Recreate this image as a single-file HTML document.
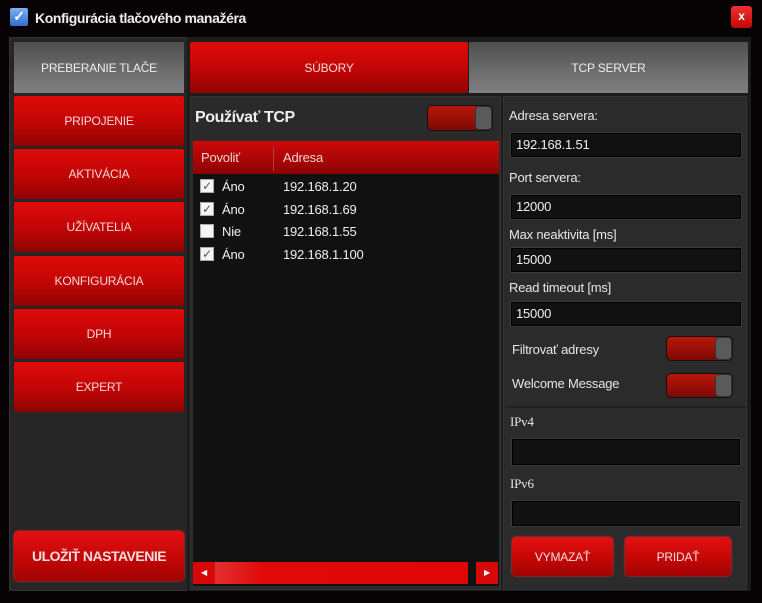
<!DOCTYPE html>
<html><head><meta charset="utf-8"><style>
*{box-sizing:border-box;margin:0;padding:0}
body{width:762px;height:603px;background:#070304;position:relative;overflow:hidden;font-family:"Liberation Sans",sans-serif;color:#eee;letter-spacing:-0.2px}
.a{position:absolute}
.red{background:linear-gradient(#e00a0a,#c00505 55%,#8e0202);color:#f0d8d8;font-size:12px;display:flex;align-items:center;justify-content:center;border-radius:2px}
.gray{background:linear-gradient(#4e4e4e,#6e6e6e 60%,#808080);color:#eee;font-size:12px;display:flex;align-items:center;justify-content:center}
.lbl{font-size:13px;color:#e6e6e6}
.inp{background:#111;border:1px solid #3a3a3a;box-shadow:inset 0 0 0 1px #000;font-size:13px;color:#f0f0f0;padding:4px 0 0 5px}
.tog{background:linear-gradient(#b8160a,#7c0a04);border:1px solid #111;border-radius:5px}
.tog:after{content:"";position:absolute;right:0;top:0;width:17px;height:100%;background:#5a5a5a;border-radius:4px;border:1px solid #333;box-sizing:border-box}
.cb{width:14px;height:14px;background:#f4f4f4;border:1px solid #aaa;font-size:12px;color:#555;line-height:13px;text-align:center}
.row{font-size:13px;color:#eee}
.btn{background:linear-gradient(#e41010,#c00606 60%,#a00303);border-radius:4px;color:#f3dede;font-size:12px;display:flex;align-items:center;justify-content:center;box-shadow:0 0 2px #f33}
</style></head><body>
<div class="a" style="left:10px;top:8px;width:18px;height:18px;background:linear-gradient(#7fb0f0,#2f6fd0);border-radius:2px;color:#fff;font-size:14px;text-align:center;line-height:17px;font-weight:bold">✓</div>
<div class="a" style="left:35px;top:10px;font-size:14px;font-weight:bold;color:#eee;letter-spacing:-0.4px">Konfigurácia tlačového manažéra</div>
<div class="a" style="left:731px;top:6px;width:21px;height:22px;background:linear-gradient(#f03030,#c00808);border-radius:3px;color:#fff;font-size:12px;font-weight:bold;text-align:center;line-height:21px">x</div>

<div class="a" style="left:9px;top:37px;width:180px;height:554px;background:#262626;border:1px solid #333"></div>
<div class="a" style="left:187px;top:37px;width:564px;height:554px;background:#1c1c1c"></div>

<div class="a gray" style="left:14px;top:42px;width:170px;height:51px">PREBERANIE TLAČE</div>
<div class="a red" style="left:14px;top:96px;width:170px;height:50px">PRIPOJENIE</div>
<div class="a red" style="left:14px;top:149px;width:170px;height:50px">AKTIVÁCIA</div>
<div class="a red" style="left:14px;top:202px;width:170px;height:50px">UŽÍVATELIA</div>
<div class="a red" style="left:14px;top:256px;width:170px;height:50px">KONFIGURÁCIA</div>
<div class="a red" style="left:14px;top:309px;width:170px;height:50px">DPH</div>
<div class="a red" style="left:14px;top:362px;width:170px;height:50px">EXPERT</div>
<div class="a btn" style="left:14px;top:531px;width:170px;height:50px;font-weight:bold;font-size:14px;letter-spacing:-0.5px">ULOŽIŤ NASTAVENIE</div>

<div class="a red" style="left:190px;top:42px;width:278px;height:51px">SÚBORY</div>
<div class="a gray" style="left:469px;top:42px;width:279px;height:51px">TCP SERVER</div>

<div class="a" style="left:190px;top:96px;width:311px;height:494px;background:#2a2a2a;border:1px solid #333"></div>
<div class="a" style="left:195px;top:109px;font-size:16px;font-weight:bold;color:#eee;letter-spacing:-0.4px">Používať TCP</div>
<div class="a tog" style="left:427px;top:105px;width:66px;height:26px"></div>
<div class="a" style="left:192px;top:140px;width:308px;height:447px;background:#111;border:1px solid #2e2e2e"></div>
<div class="a" style="left:193px;top:141px;width:306px;height:33px;background:linear-gradient(#d00808,#8a0303)"></div>
<div class="a" style="left:273px;top:147px;width:1px;height:24px;background:#b04040"></div>
<div class="a row" style="left:201px;top:150px;color:#f0d0d0">Povoliť</div>
<div class="a row" style="left:283px;top:150px;color:#f0d0d0">Adresa</div>
<div class="a cb" style="left:200px;top:179px">✓</div><div class="a row" style="left:222px;top:179px">Áno</div><div class="a row" style="left:283px;top:179px">192.168.1.20</div>
<div class="a cb" style="left:200px;top:202px">✓</div><div class="a row" style="left:222px;top:202px">Áno</div><div class="a row" style="left:283px;top:202px">192.168.1.69</div>
<div class="a cb" style="left:200px;top:224px"></div><div class="a row" style="left:222px;top:224px">Nie</div><div class="a row" style="left:283px;top:224px">192.168.1.55</div>
<div class="a cb" style="left:200px;top:247px">✓</div><div class="a row" style="left:222px;top:247px">Áno</div><div class="a row" style="left:283px;top:247px">192.168.1.100</div>
<div class="a" style="left:193px;top:562px;width:22px;height:22px;background:#d80808;color:#fff;font-size:8px;text-align:center;line-height:22px">◀</div>
<div class="a" style="left:215px;top:562px;width:253px;height:22px;background:linear-gradient(90deg,#e23030,#e00808 20%,#e00606)"></div>
<div class="a" style="left:476px;top:562px;width:22px;height:22px;background:#d80808;color:#fff;font-size:8px;text-align:center;line-height:22px">▶</div>

<div class="a" style="left:503px;top:96px;width:244px;height:494px;background:#2b2b2b;border:1px solid #333"></div>
<div class="a lbl" style="left:509px;top:108px">Adresa servera:</div>
<div class="a inp" style="left:510px;top:132px;width:232px;height:26px">192.168.1.51</div>
<div class="a lbl" style="left:509px;top:170px">Port servera:</div>
<div class="a inp" style="left:510px;top:194px;width:232px;height:26px">12000</div>
<div class="a lbl" style="left:509px;top:227px">Max neaktivita [ms]</div>
<div class="a inp" style="left:510px;top:247px;width:232px;height:26px">15000</div>
<div class="a lbl" style="left:509px;top:280px">Read timeout [ms]</div>
<div class="a inp" style="left:510px;top:301px;width:232px;height:26px">15000</div>
<div class="a lbl" style="left:512px;top:342px">Filtrovať adresy</div>
<div class="a tog" style="left:666px;top:336px;width:67px;height:25px"></div>
<div class="a lbl" style="left:512px;top:376px">Welcome Message</div>
<div class="a tog" style="left:666px;top:373px;width:67px;height:25px"></div>
<div class="a" style="left:506px;top:406px;width:240px;height:2px;background:#202020"></div>
<div class="a lbl" style="left:510px;top:414px;font-family:'Liberation Serif',serif">IPv4</div>
<div class="a inp" style="left:511px;top:438px;width:230px;height:28px"></div>
<div class="a lbl" style="left:510px;top:476px;font-family:'Liberation Serif',serif">IPv6</div>
<div class="a inp" style="left:511px;top:500px;width:230px;height:27px"></div>
<div class="a btn" style="left:512px;top:537px;width:101px;height:39px">VYMAZAŤ</div>
<div class="a btn" style="left:625px;top:537px;width:106px;height:39px">PRIDAŤ</div>
</body></html>
